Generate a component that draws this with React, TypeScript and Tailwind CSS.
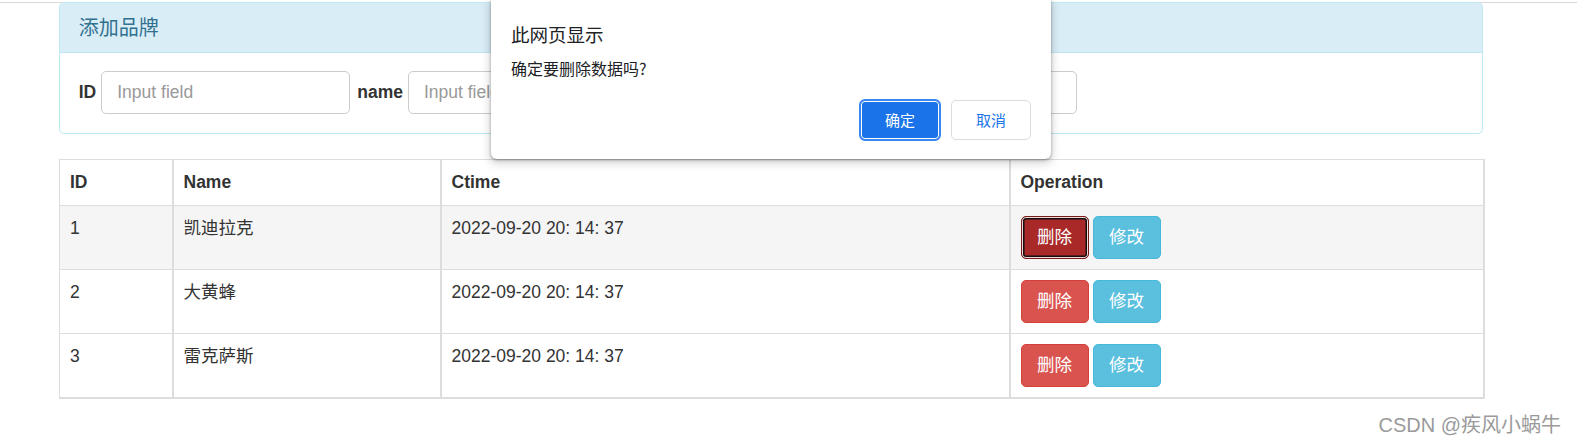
import React from "react";

const rows = [
  { id: 1, name: "凯迪拉克", ctime: "2022-09-20 20: 14: 37", active: true },
  { id: 2, name: "大黄蜂", ctime: "2022-09-20 20: 14: 37", active: false },
  { id: 3, name: "雷克萨斯", ctime: "2022-09-20 20: 14: 37", active: false },
];

export default function App() {
  return (
    <div className="relative w-[1577px] h-[443px] overflow-hidden bg-white font-['Liberation_Sans','Noto_Sans_CJK_SC',sans-serif] text-[#333] text-[17.5px]">
      <div className="h-[2px]" />
      <div className="h-px bg-[#d9d9d9]" />
      <div className="-mt-px ml-[59px] w-[1424px]">
        {/* Panel */}
        <div className="border border-[#bce8f1] rounded-[5px] bg-white">
          <div className="bg-[#d9edf7] border-b border-[#bce8f1] rounded-t-[4px] px-[18.75px] pt-[13.5px] pb-[13px]">
            <h3 className="text-[20px] leading-[22px] text-[#31708f] font-normal">添加品牌</h3>
          </div>
          <div className="px-[18.75px] pt-[18.75px] pb-[19px] flex items-center">
            <label className="font-bold mr-[5px] leading-[25px]">ID</label>
            <input
              className="w-[249px] h-[43px] border border-[#ccc] rounded-[5px] px-[15px] text-[17.5px] placeholder:text-[#999] outline-none"
              placeholder="Input field"
            />
            <label className="font-bold ml-[7px] mr-[5px] leading-[25px]">name</label>
            <input
              className="w-[249px] h-[43px] border border-[#ccc] rounded-[5px] px-[15px] text-[17.5px] placeholder:text-[#999] outline-none"
              placeholder="Input field"
            />
            <label className="font-bold ml-[7px] mr-[5px] leading-[25px]">Ctime</label>
            <input
              className="w-[359px] h-[43px] border border-[#ccc] rounded-[5px] px-[15px] text-[17.5px] placeholder:text-[#999] outline-none"
              placeholder="Input field"
            />
          </div>
        </div>

        {/* Table */}
        <table className="mt-[25px] w-[1424px] table-fixed border-collapse">
          <colgroup>
            <col className="w-[113px]" />
            <col className="w-[268px]" />
            <col className="w-[569px]" />
            <col className="w-[474px]" />
          </colgroup>
          <thead>
            <tr>
              <th className="border border-[#ddd] text-left font-bold px-[10px] py-[10px] leading-[25px]">ID</th>
              <th className="border border-[#ddd] border-l-2 text-left font-bold px-[10px] py-[10px] leading-[25px]">Name</th>
              <th className="border border-[#ddd] border-l-2 text-left font-bold px-[10px] py-[10px] leading-[25px]">Ctime</th>
              <th className="border border-[#ddd] border-l-2 border-r-2 text-left font-bold px-[10px] py-[10px] leading-[25px]">Operation</th>
            </tr>
          </thead>
          <tbody>
            {rows.map((r, i) => {
              const last = i === rows.length - 1;
              const bg = r.active ? "bg-[#f5f5f5]" : "bg-white";
              return (
                <tr key={r.id} className={bg}>
                  <td className={`border border-[#ddd] align-top px-[10px] py-[10px] leading-[25px] ${last ? "border-b-2" : ""}`}>{r.id}</td>
                  <td className={`border border-[#ddd] border-l-2 align-top px-[10px] py-[10px] leading-[25px] ${last ? "border-b-2" : ""}`}>{r.name}</td>
                  <td className={`border border-[#ddd] border-l-2 align-top px-[10px] py-[10px] leading-[25px] ${last ? "border-b-2" : ""}`}>{r.ctime}</td>
                  <td className={`border border-[#ddd] border-l-2 border-r-2 align-top px-[10px] py-[10px] leading-[25px] ${last ? "border-b-2" : ""}`}>
                    <div className="flex gap-[4px]">
                      {r.active ? (
                        <button className="h-[43px] w-[68px] rounded-[5px] border border-[#761c19] bg-[#a92828] text-white text-[17.5px] leading-[25px] shadow-[inset_0_0_0_1px_#f3d6d6,inset_0_0_0_2.5px_#111]">
                          删除
                        </button>
                      ) : (
                        <button className="h-[43px] w-[68px] rounded-[5px] border border-[#d43f3a] bg-[#d9534f] text-white text-[17.5px] leading-[25px]">
                          删除
                        </button>
                      )}
                      <button className="h-[43px] w-[68px] rounded-[5px] border border-[#46b8da] bg-[#5bc0de] text-white text-[17.5px] leading-[25px]">
                        修改
                      </button>
                    </div>
                  </td>
                </tr>
              );
            })}
          </tbody>
        </table>
      </div>

      {/* Watermark */}
      <div className="absolute right-[16px] top-[413px] text-[20px] leading-[24px] text-[#9a9a9a] font-['Liberation_Sans','Noto_Sans_CJK_SC',sans-serif] [text-shadow:0_0_1px_#fff]">
        CSDN @疾风小蜗牛
      </div>

      {/* Alert dialog */}
      <div className="absolute left-[491px] top-0 w-[560px] h-[159px] bg-white rounded-b-[6px] shadow-[0_1px_3px_rgba(0,0,0,0.35),0_3px_8px_2px_rgba(0,0,0,0.15)] font-['Noto_Sans_CJK_SC','Liberation_Sans',sans-serif] text-[#202124]">
        <div className="pl-[20px] pr-[20px] pt-[22px]">
          <div className="text-[18.5px] leading-[24px]">此网页显示</div>
          <div className="mt-[12px] text-[16px] leading-[20px]">确定要删除数据吗?</div>
          <div className="mt-[22px] flex justify-end gap-[10px]">
            <button className="w-[82px] h-[42px] -my-px rounded-[6px] border-2 border-[#3b86ee] bg-[#1a73e8] text-white text-[15px] shadow-[inset_0_0_0_1px_#ffffff]">
              确定
            </button>
            <button className="w-[80px] h-[40px] rounded-[5px] border border-[#dadce0] bg-white text-[#1a73e8] text-[15px]">
              取消
            </button>
          </div>
        </div>
      </div>
    </div>
  );
}
